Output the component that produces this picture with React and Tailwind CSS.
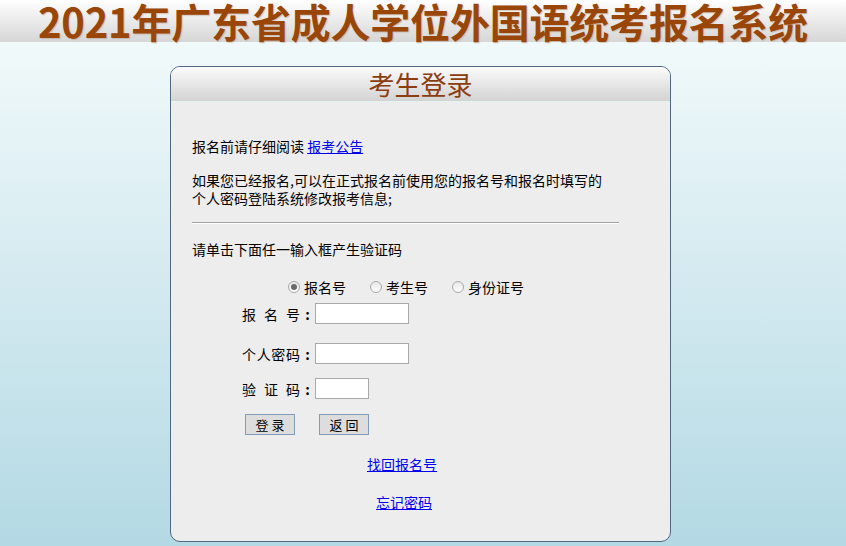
import React from "react";

const font = { fontFamily: '"Noto Sans CJK SC", "Noto Sans", sans-serif' };

function Radio({ checked, label, className = "" }) {
  return (
    <span className={"flex items-center " + className}>
      <span className="w-[12px] h-[12px] rounded-full border border-[#a8a8a8] bg-gradient-to-b from-[#e8e8e8] to-[#fdfdfd] flex items-center justify-center">
        {checked && <span className="w-[6px] h-[6px] rounded-full bg-[#6a6a6a]" />}
      </span>
      <span className="ml-[4px] text-[14px] leading-[18px] text-black">{label}</span>
    </span>
  );
}

function SpacedLabel({ chars }) {
  return (
    <span className="flex items-center text-[14px] leading-[18px] text-black">
      <span className="flex w-[58px] justify-between">
        {chars.map((c, i) => (
          <span key={i}>{c}</span>
        ))}
      </span>
      <span className="w-[15px] text-center font-bold">:</span>
    </span>
  );
}

export default function App() {
  return (
    <div
      className="w-full h-[546px] overflow-hidden bg-gradient-to-b from-[#f6fcfc] to-[#b3d9e4]"
      style={font}
    >
      <div className="h-[42px] pt-[1px] bg-gradient-to-b from-[#ffffff] to-[#d6d6d6] flex justify-center items-start">
        <span className="text-[40px] leading-[41px] font-bold text-[#9a4608] whitespace-nowrap tracking-[-0.2px] [text-shadow:1px_1px_1px_rgba(160,120,90,0.35)]">
          2021年广东省成人学位外国语统考报名系统
        </span>
      </div>

      <div className="mt-[24px] ml-[170px] w-[501px] h-[476px] border border-[#516681] rounded-[10px] overflow-hidden bg-[#ededed] flex flex-col">
        <div className="h-[35px] bg-gradient-to-b from-[#fbfbfb] to-[#d3d3d3] border-b border-[#e4f2f2] flex items-center justify-center">
          <span className="text-[26px] leading-[30px] text-[#8b3d10]">考生登录</span>
        </div>

        <div className="pl-[21px] text-[14px] leading-[18px] text-black">
          <p className="mt-[35px]">
            报名前请仔细阅读{" "}
            <a href="#" className="text-[#0000ee] underline">报考公告</a>
          </p>
          <p className="mt-[16px] leading-[18px]">
            <span className="block">如果您已经报名,可以在正式报名前使用您的报名号和报名时填写的</span>
            <span className="block">个人密码登陆系统修改报考信息;</span>
          </p>
          <div className="mt-[15px] w-[427px] h-[2px] border-t border-[#a3a3a3] border-b-white border-b" />
          <p className="mt-[16px]">请单击下面任一输入框产生验证码</p>

          <div className="mt-[20px] flex pl-[96px]">
            <Radio checked label="报名号" />
            <Radio label="考生号" className="ml-[24px]" />
            <Radio label="身份证号" className="ml-[24px]" />
          </div>

          <div className="pl-[50px]">
            <div className="mt-[7px] flex items-center">
              <SpacedLabel chars={["报", "名", "号"]} />
              <span className="w-[94px] h-[21px] bg-white border border-[#a9a9a9]" />
            </div>
            <div className="mt-[19px] flex items-center">
              <SpacedLabel chars={["个", "人", "密", "码"]} />
              <span className="w-[94px] h-[21px] bg-white border border-[#a9a9a9]" />
            </div>
            <div className="mt-[14px] flex items-center">
              <SpacedLabel chars={["验", "证", "码"]} />
              <span className="w-[54px] h-[21px] bg-white border border-[#a9a9a9]" />
            </div>
            <div className="mt-[15px] flex pl-[3px]">
              <span className="w-[50px] h-[21px] border border-[#7f9dbb] bg-[#dddddd] flex items-center justify-center text-[13px]">
                登 录
              </span>
              <span className="ml-[24px] w-[50px] h-[21px] border border-[#7f9dbb] bg-[#dddddd] flex items-center justify-center text-[13px]">
                返 回
              </span>
            </div>
          </div>

          <div className="mt-[20px] pl-[175px]">
            <a href="#" className="text-[#0000ee] underline">找回报名号</a>
          </div>
          <div className="mt-[20px] pl-[184px]">
            <a href="#" className="text-[#0000ee] underline">忘记密码</a>
          </div>
        </div>
      </div>
    </div>
  );
}
